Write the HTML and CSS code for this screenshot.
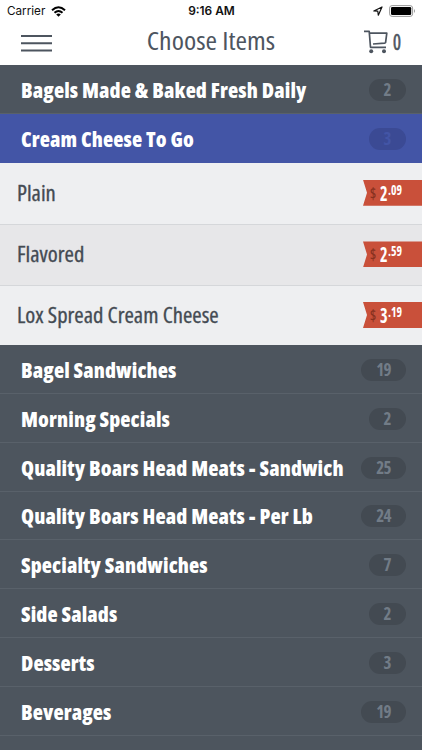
FILE: index.html
```
<!DOCTYPE html>
<html lang="en">
<head>
<meta charset="utf-8">
<meta name="viewport" content="width=device-width, initial-scale=1">
<title>Choose Items</title>
<link rel="stylesheet" href="styles.css">
</head>
<body>
<div class="status">
  <div class="carrier"><span>Carrier</span>
    <svg width="15" height="11" viewBox="0 0 15 11"><g fill="none" stroke="#000" stroke-width="2"><path d="M1 4.2Q7.5-1.8 14 4.2"/><path d="M3.5 6.8Q7.5 3.2 11.5 6.8"/></g><path d="M5.2 8.4Q7.5 6.6 9.8 8.4L7.5 10.8z"/></svg>
  </div>
  <div class="time">9:16 AM</div>
  <div class="indicators">
    <svg width="10" height="10" viewBox="0 0 10 10"><path d="M.8 5 9 1 5.3 9.2 4.8 5.2z" fill="none" stroke="#111" stroke-width="1.2" stroke-linejoin="round"/></svg>
    <svg width="27" height="12" viewBox="0 0 27 12"><rect x=".6" y=".6" width="23" height="10.8" rx="2.5" fill="#fff" stroke="#999"/><rect x="2" y="2" width="20.2" height="8" rx="1.2"/><path d="M25 4q2 2 0 4z" fill="#999"/></svg>
  </div>
</div>
<header class="bar">
  <svg class="menu" width="31" height="18" viewBox="0 0 31 18"><path d="M0 2h31M0 9.3h31M0 16.5h31" stroke="#4d555f" stroke-width="1.9"/></svg>
  <h1>Choose Items</h1>
  <div class="cart">
    <svg width="24" height="24" viewBox="0 0 24 24"><g fill="none" stroke="#4d555f" stroke-width="1.7" stroke-linejoin="round"><path d="M0 1.3h5.2L6.5 17.3H22"/><path d="M5.4 3.2H22.8L21.6 12.4Q21.4 13 20.6 13.1L9 14"/></g><g fill="#4d555f"><circle cx="7.2" cy="21.2" r="2"/><circle cx="20" cy="21.2" r="2"/></g></svg>
    <span>0</span>
  </div>
</header>
<main>
  <div class="cat"><span>Bagels Made &amp; Baked Fresh Daily</span><b class="pill">2</b></div>
  <div class="cat active"><span>Cream Cheese To Go</span><b class="pill">3</b></div>
  <ul class="items">
    <li><span class="name">Plain</span><div class="tag"><i>$</i><b>2</b><sup>.09</sup></div></li>
    <li><span class="name">Flavored</span><div class="tag"><i>$</i><b>2</b><sup>.59</sup></div></li>
    <li><span class="name">Lox Spread Cream Cheese</span><div class="tag"><i>$</i><b>3</b><sup>.19</sup></div></li>
  </ul>
  <div class="cat"><span>Bagel Sandwiches</span><b class="pill">19</b></div>
  <div class="cat"><span>Morning Specials</span><b class="pill">2</b></div>
  <div class="cat"><span>Quality Boars Head Meats - Sandwich</span><b class="pill">25</b></div>
  <div class="cat"><span>Quality Boars Head Meats - Per Lb</span><b class="pill">24</b></div>
  <div class="cat"><span>Specialty Sandwiches</span><b class="pill">7</b></div>
  <div class="cat"><span>Side Salads</span><b class="pill">2</b></div>
  <div class="cat"><span>Desserts</span><b class="pill">3</b></div>
  <div class="cat"><span>Beverages</span><b class="pill">19</b></div>
</main>
</body>
</html>
```
FILE: styles.css
```
* { box-sizing: border-box; }
body { margin: 0; height: 750px; overflow: hidden; background: #4d555e; color: #4d555f; font-family: "Open Sans", "Noto Sans", sans-serif; font-stretch: 75%; }
svg { display: block; flex: none; }
.status { height: 22px; padding: 0 6px 0 7px; background: #fff; color: #111; display: grid; grid-template-columns: 1fr auto 1fr; align-items: center; font: 11.7px/22px Inter, sans-serif; }
.carrier, .indicators { display: flex; align-items: center; gap: 6px; }
.indicators { justify-content: flex-end; }
.time { font-weight: 600; font-size: 11.9px; }
.bar { height: 43px; padding: 0 21px; background: #fff; display: grid; grid-template-columns: 1fr auto 1fr; align-items: center; }
.menu { margin-top: -1px; }
.bar h1 { margin: 0; padding-bottom: 7px; font-size: 26px; line-height: 35px; font-weight: 400; transform: scaleX(1.07); }
.cart { justify-self: end; display: flex; align-items: center; gap: 5px; padding-bottom: 3px; font-size: 22px; line-height: 24px; }
.cart span { width: 8px; padding-bottom: 3px; transform: scaleX(.85); transform-origin: left; -webkit-text-stroke: .6px; }
.cat { height: 48.85px; padding: 2px 16px 0 21px; display: flex; align-items: center; justify-content: space-between; border-bottom: 1px solid #59616a; color: #fff; font-size: 21px; font-weight: 800; letter-spacing: .12px; white-space: nowrap; }
.cat.active { background: #4355a6; border-color: #4355a6; }
.pill { height: 22px; padding: 0 15px; border-radius: 11px; background: #434a52; color: #727c87; font-size: 17px; line-height: 22px; font-weight: 700; letter-spacing: -.6px; }
.active .pill { background: #3b4a94; color: #4355a6; }
.items { height: 182.3px; margin: 0; padding: 0; list-style: none; color: #444b53; background: #eeeff1; }
.items li { height: 61px; padding: 0 0 1px 17px; display: flex; align-items: center; justify-content: space-between; font-size: 21px; border-bottom: 1px solid #d5d7da; }
.items li:first-child { height: 62.3px; }
.items li:nth-child(2) { background: #e7e7e9; }
.items li:last-child { height: 59px; border: 0; }
.name { transform: scaleX(1.08); transform-origin: left; -webkit-text-stroke: .3px; }
.tag { width: 59px; height: 26px; padding-left: 7px; display: flex; background: #c9503a; color: #fff; clip-path: polygon(0 0, 100% 0, 100% 100%, 0 100%, 4px 50%); line-height: 24px; }
.tag i, .tag b, .tag sup { transform-origin: left; }
.tag i { width: 10px; font-style: normal; font-size: 16px; line-height: 26px; font-weight: 600; color: #87301f; transform: scaleX(.85); }
.tag b { width: 8px; font-size: 22px; transform: scaleX(.74); }
.tag sup { font-size: 14px; line-height: 19px; font-weight: 700; transform: scaleX(.84); }
```
